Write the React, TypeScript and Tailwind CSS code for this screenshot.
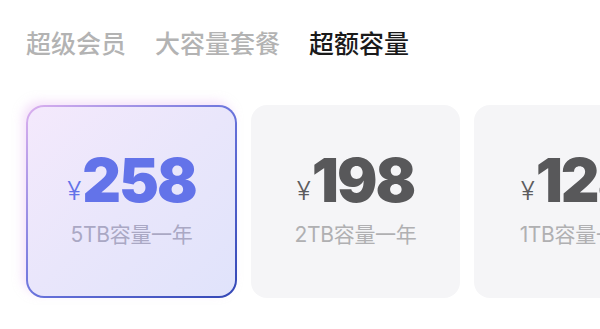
import React from 'react';

const tabs = [
  { label: '超级会员', active: false },
  { label: '大容量套餐', active: false },
  { label: '超额容量', active: true },
];

const plans = [
  { price: '258', desc: '5TB容量一年', selected: true },
  { price: '198', desc: '2TB容量一年', selected: false },
  { price: '128', desc: '1TB容量一年', selected: false },
];

const cjk = { fontFamily: 'Inter, "Noto Sans CJK SC", sans-serif' };

function PlanCard({ price, desc, selected }: { price: string; desc: string; selected: boolean }) {
  const body = (
    <div
      className={`flex h-full w-full flex-col items-center justify-center rounded-[16px] ${
        selected ? 'bg-gradient-to-br from-[#f4e9fc] via-[#e9e6fb] to-[#e0e3fb]' : 'bg-[#f5f5f7]'
      }`}
    >
      <div className="flex items-end">
        <span
          className={`mb-[1px] mr-[1px] text-[26px] font-light leading-none ${selected ? 'text-[#6373e9]' : 'text-[#5c5c5e]'}`}
          style={cjk}
        >
          ¥
        </span>
        <span
          className={`text-[60px] font-black leading-[50px] tracking-[-2px] ${selected ? 'text-[#6373e9]' : 'text-[#58585a]'}`}
          style={cjk}
        >
          {price}
        </span>
      </div>
      <div
        className={`mt-[17px] text-[21px] leading-[26px] tracking-[-0.3px] ${selected ? 'text-[#aaa8c4]' : 'text-[#b0b0b2]'}`}
        style={cjk}
      >
        {desc}
      </div>
    </div>
  );

  if (selected) {
    return (
      <div className="h-[193px] w-[211px] shrink-0 rounded-[18px] bg-gradient-to-br from-[#dcb0ee] via-[#6a74dc] to-[#3347b5] p-[2px] shadow-[-4px_-4px_10px_rgba(236,200,245,0.5)]">
        {body}
      </div>
    );
  }
  return <div className="h-[193px] w-[209px] shrink-0 rounded-[18px]">{body}</div>;
}

export default function App() {
  return (
    <div className="h-[329px] w-[600px] overflow-hidden bg-white" style={cjk}>
      <div className="flex gap-[29px] pl-[26px] pt-[28px]">
        {tabs.map((t) => (
          <div
            key={t.label}
            className={`text-[25px] font-medium leading-[32px] ${t.active ? 'text-[#1a1a1a]' : 'text-[#b3b3b3]'}`}
          >
            {t.label}
          </div>
        ))}
      </div>
      <div className="mt-[45px] flex gap-[14px] pl-[26px]">
        {plans.map((p) => (
          <PlanCard key={p.price} {...p} />
        ))}
      </div>
    </div>
  );
}
